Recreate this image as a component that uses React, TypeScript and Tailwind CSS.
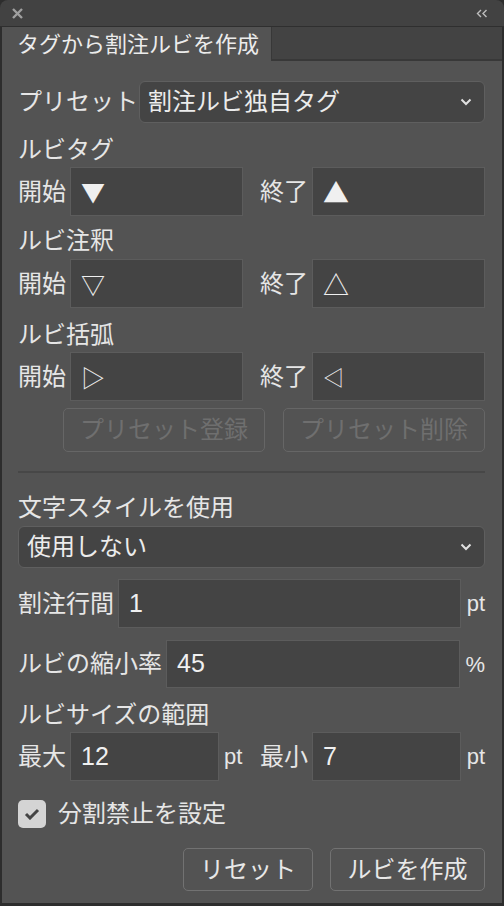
import React from "react";

const font = "font-['Liberation_Sans','Noto_Sans_CJK_JP',sans-serif]";
const sym = "font-['Noto_Sans_CJK_JP',sans-serif]";

const Label = ({ text, className = "" }: { text: string; className?: string }) => (
  <div className={`h-[28px] flex items-center text-[24px] leading-none text-[#e6e6e6] ${className}`}>
    {text}
  </div>
);

const Field = ({
  value,
  width,
  mono = false,
  symClass = "",
}: {
  value: string;
  width: string;
  mono?: boolean;
  symClass?: string;
}) => (
  <div
    className={`${width} h-full shrink-0 bg-[#444444] border-[1.5px] border-[#5c5c5c] flex items-center pl-[10px] text-[#f0f0f0] ${
      mono ? "text-[25px]" : `${sym} ${symClass}`
    }`}
  >
    {value}
  </div>
);

const Chevron = () => (
  <svg width="12" height="8" viewBox="0 0 12 8" className="shrink-0">
    <path d="M1.5 1.5 L6 6 L10.5 1.5" fill="none" stroke="#e0e0e0" strokeWidth="2" />
  </svg>
);

const Select = ({ value, className = "" }: { value: string; className?: string }) => (
  <div
    className={`h-[42px] bg-[#444444] border-[1.5px] border-[#5f5f5f] rounded-[6px] flex items-center justify-between pl-[8px] pr-[12px] text-[24px] text-[#ececec] ${className}`}
  >
    <span>{value}</span>
    <Chevron />
  </div>
);

const PairRow = ({ start, end, startCls, endCls, mt }: { start: string; end: string; startCls: string; endCls: string; mt: string }) => (
  <div className={`${mt} h-[49px] flex items-center`}>
    <div className="w-[52px] text-[24px] text-[#e6e6e6]">開始</div>
    <Field value={start} width="w-[173px]" symClass={startCls} />
    <div className="w-[17px]" />
    <div className="w-[52px] text-[24px] text-[#e6e6e6]">終了</div>
    <Field value={end} width="w-[173px]" symClass={endCls} />
  </div>
);

const Button = ({ text, width, disabled = false }: { text: string; width: string; disabled?: boolean }) => (
  <div
    className={`${width} h-full rounded-[5px] border-[1.5px] flex items-center justify-center text-[24px] ${
      disabled ? "border-[#666666] text-[#6f6f6f]" : "border-[#727272] text-[#e8e8e8]"
    }`}
  >
    {text}
  </div>
);

export default function App() {
  return (
    <div className={`w-[504px] h-[906px] bg-[#2d2d2d] flex flex-col ${font}`}>
      <div className="h-[27px] shrink-0 bg-[#424242] rounded-t-[8px] border-b border-[#2f2f2f] flex items-center justify-between pl-[12px] pr-[16px]">
        <svg width="11" height="11" viewBox="0 0 11 11">
          <path d="M1 1 L10 10 M10 1 L1 10" stroke="#a0a0a0" strokeWidth="2.4" />
        </svg>
        <svg width="12" height="9" viewBox="0 0 12 9">
          <path d="M5 1 L1.5 4.5 L5 8 M10.5 1 L7 4.5 L10.5 8" fill="none" stroke="#bdbdbd" strokeWidth="1.4" />
        </svg>
      </div>
      <div className="flex-1 mx-[2px] mb-[3px] flex flex-col bg-[#535353]">
        <div className="h-[34px] shrink-0 flex">
          <div className="w-[270px] pl-[15px] flex items-center text-[22px] text-[#ececec] bg-[#535353] border-r-[1.5px] border-[#383838]">
            タグから割注ルビを作成
          </div>
          <div className="flex-1 bg-[#434343] border-b-[2px] border-[#383838]" />
        </div>

        <div className="flex-1 flex flex-col pl-[16px] pr-[17px]">
          <div className="mt-[20px] h-[42px] flex items-center">
            <div className="w-[121px] text-[24px] text-[#e6e6e6]">プリセット</div>
            <Select value="割注ルビ独自タグ" className="flex-1" />
          </div>

          <Label text="ルビタグ" className="mt-[13px]" />
          <PairRow start="▼" end="▲" startCls="text-[24px]" endCls="text-[26px]" mt="mt-[3px]" />

          <Label text="ルビ注釈" className="mt-[11px]" />
          <PairRow start="▽" end="△" startCls="text-[24px]" endCls="text-[26px]" mt="mt-[4px]" />

          <Label text="ルビ括弧" className="mt-[13px]" />
          <PairRow start="▷" end="◁" startCls="text-[24px]" endCls="text-[21px]" mt="mt-[3px]" />

          <div className="mt-[7px] h-[44px] flex justify-end gap-[18px]">
            <Button text="プリセット登録" width="w-[202px]" disabled />
            <Button text="プリセット削除" width="w-[202px]" disabled />
          </div>

          <div className="mt-[19px] h-[2px] bg-[#474747]" />

          <Label text="文字スタイルを使用" className="mt-[21px]" />
          <Select value="使用しない" className="mt-[4px]" />

          <div className="mt-[11px] h-[49px] flex items-center">
            <div className="w-[100px] text-[24px] text-[#e6e6e6]">割注行間</div>
            <Field value="1" width="w-[343px]" mono />
            <div className="flex-1 text-right text-[22px] text-[#e6e6e6]">pt</div>
          </div>

          <div className="mt-[12px] h-[48px] flex items-center">
            <div className="w-[148px] text-[24px] text-[#e6e6e6] whitespace-nowrap">ルビの縮小率</div>
            <Field value="45" width="w-[294px]" mono />
            <div className="flex-1 text-right text-[22px] text-[#e6e6e6]">%</div>
          </div>

          <Label text="ルビサイズの範囲" className="mt-[13px]" />
          <div className="mt-[3px] h-[49px] flex items-center">
            <div className="w-[52px] text-[24px] text-[#e6e6e6]">最大</div>
            <Field value="12" width="w-[149px]" mono />
            <div className="w-[41px] pl-[5px] text-[22px] text-[#e6e6e6]">pt</div>
            <div className="w-[52px] text-[24px] text-[#e6e6e6]">最小</div>
            <Field value="7" width="w-[149px]" mono />
            <div className="flex-1 text-right text-[22px] text-[#e6e6e6]">pt</div>
          </div>

          <div className="mt-[19px] h-[28px] flex items-center">
            <div className="w-[28px] h-[28px] rounded-[5px] bg-[#d4d4d4] flex items-center justify-center">
              <svg width="16" height="12" viewBox="0 0 16 12">
                <path d="M2 6 L6 10 L14 2" fill="none" stroke="#444444" strokeWidth="3" />
              </svg>
            </div>
            <div className="ml-[12px] text-[24px] text-[#e6e6e6]">分割禁止を設定</div>
          </div>

          <div className="mt-[20px] h-[43px] flex justify-end gap-[17px]">
            <Button text="リセット" width="w-[130px]" />
            <Button text="ルビを作成" width="w-[155px]" />
          </div>
        </div>
      </div>
    </div>
  );
}
